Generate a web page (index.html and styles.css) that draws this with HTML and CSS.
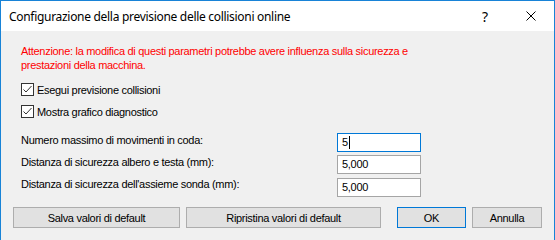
FILE: index.html
```html
<!DOCTYPE html>
<html>
<head>
  <meta charset="UTF-8">
  <title>Configurazione della previsione delle collisioni online</title>
  <link rel="stylesheet" href="styles.css">
</head>
<body>
  <div class="window">
    <div class="titlebar">
      <span class="title">Configurazione della previsione delle collisioni online</span>
      <span class="caption-btn help">?</span>
      <span class="caption-btn close">
        <svg width="10" height="10" viewBox="0 0 10 10"><path d="M0.5 0.5L9.5 9.5M9.5 0.5L0.5 9.5" stroke="#000" stroke-width="1"/></svg>
      </span>
    </div>

    <div class="content">
      <p class="warning">Attenzione: la modifica di questi parametri potrebbe avere influenza sulla sicurezza e<br>prestazioni della macchina.</p>

      <div class="checks">
        <label class="check">
          <span class="box"><svg width="11" height="11" viewBox="0 0 11 11"><path d="M1.5 5.5L4 8L9.5 2" fill="none" stroke="#333" stroke-width="1"/></svg></span>
          Esegui previsione collisioni
        </label>
        <label class="check">
          <span class="box"><svg width="11" height="11" viewBox="0 0 11 11"><path d="M1.5 5.5L4 8L9.5 2" fill="none" stroke="#333" stroke-width="1"/></svg></span>
          Mostra grafico diagnostico
        </label>
      </div>

      <div class="fields">
        <span class="field-label">Numero massimo di movimenti in coda:</span>
        <span class="field focused">5<span class="caret"></span></span>
        <span class="field-label">Distanza di sicurezza albero e testa (mm):</span>
        <span class="field">5,000</span>
        <span class="field-label">Distanza di sicurezza dell'assieme sonda (mm):</span>
        <span class="field last">5,000</span>
      </div>
    </div>

    <div class="buttons">
      <button class="btn save">Salva valori di default</button>
      <button class="btn restore">Ripristina valori di default</button>
      <button class="btn ok">OK</button>
      <button class="btn cancel">Annulla</button>
    </div>
  </div>
</body>
</html>
```

FILE: styles.css
```css
body {
  margin: 0;
  background: #f0f0f0;
}
.window {
  width: 553px;
  height: 239px;
  border: 1px solid #1883d7;
  border-bottom: none;
  background: #f0f0f0;
  font-family: "Liberation Sans", Arial, sans-serif;
  font-size: 11px;
  letter-spacing: -0.3px;
  color: #000;
}
.titlebar {
  height: 30px;
  background: #fff;
  display: flex;
  align-items: center;
}
.title {
  flex: 1;
  padding-left: 8px;
  font-family: "Noto Sans", "Open Sans", sans-serif;
  font-size: 12px;
  letter-spacing: -0.3px;
}
.caption-btn {
  width: 46px;
  height: 30px;
  display: flex;
  align-items: center;
  justify-content: center;
}
.help {
  font-family: "Noto Sans", sans-serif;
  font-size: 14px;
}
.content {
  padding: 13px 20px 0 20px;
}
.warning {
  margin: 0;
  color: #f00;
  line-height: 14px;
}
.checks {
  margin-top: 11px;
  display: flex;
  flex-direction: column;
  gap: 9px;
}
.check {
  display: flex;
  align-items: center;
  gap: 3px;
  height: 13px;
}
.box {
  width: 11px;
  height: 11px;
  border: 1px solid #333;
  background: #fff;
  display: flex;
}
.fields {
  margin-top: 15px;
  display: grid;
  grid-template-columns: 316px 84px;
  row-gap: 3px;
  align-items: start;
}
.field-label {
  line-height: 14px;
}
.field {
  height: 19px;
  box-sizing: border-box;
  border: 1px solid #a5a5a5;
  background: #fff;
  padding: 0 4px;
  line-height: 17px;
  display: flex;
  align-items: center;
}
.field.focused {
  border-color: #0078d7;
}
.field.last {
  margin-top: 1px;
}
.caret {
  width: 1px;
  height: 13px;
  background: #000;
  margin-left: 1px;
}
.buttons {
  margin-top: 10px;
  padding-left: 12px;
  display: flex;
}
.btn {
  height: 21px;
  box-sizing: border-box;
  border: 1px solid #adadad;
  background: #e1e1e1;
  font-family: "Liberation Sans", Arial, sans-serif;
  font-size: 11px;
  letter-spacing: -0.3px;
  color: #000;
  padding: 0;
  margin-right: 6px;
}
.save { width: 167px; }
.restore { width: 195px; margin-right: 16px; }
.ok { width: 69px; border-color: #0078d7; }
.cancel { width: 70px; }
```
